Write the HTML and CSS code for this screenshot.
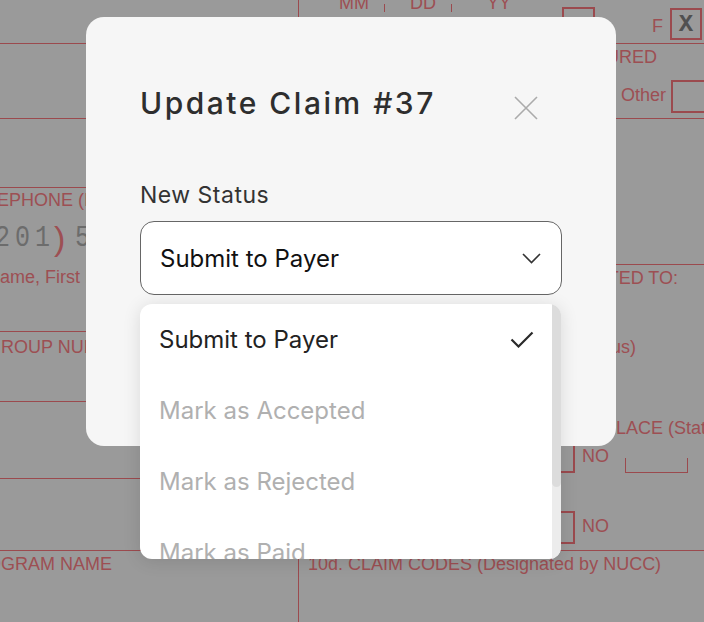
FILE: index.html
```html
<!DOCTYPE html>
<html>
<head>
<meta charset="utf-8">
<link rel="stylesheet" href="styles.css">
</head>
<body>
<div class="form">
  <div class="hl" style="top:43px;left:0;width:704px"></div>
  <div class="hl" style="top:118px;left:0;width:704px"></div>
  <div class="hl" style="top:187px;left:0;width:298px"></div>
  <div class="hl" style="top:264px;left:298px;width:406px"></div>
  <div class="hl" style="top:331px;left:0;width:298px"></div>
  <div class="hl" style="top:401px;left:0;width:298px"></div>
  <div class="hl" style="top:478px;left:0;width:298px"></div>
  <div class="hl" style="top:550px;left:0;width:704px"></div>
  <div class="vl" style="left:298px;top:0;height:622px"></div>

  <span class="ft" style="left:339px;top:-7px">MM</span>
  <span class="tick" style="left:384px"></span>
  <span class="ft" style="left:410px;top:-7px">DD</span>
  <span class="tick" style="left:451px"></span>
  <span class="ft" style="left:487px;top:-7px">YY</span>
  <span class="box" style="left:562px;top:7px;width:33px;height:33px"></span>
  <span class="ft" style="left:652px;top:16px">F</span>
  <span class="box xbox" style="left:670px;top:8px;width:32px;height:32px">X</span>
  <span class="ft" style="right:47px;top:47px">INSURED</span>
  <span class="ft" style="left:621px;top:85px">Other</span>
  <span class="box" style="left:671px;top:80px;width:40px;height:33px"></span>

  <span class="ft" style="left:-36px;top:190px">TELEPHONE (Include Area Code)</span>
  <span class="digit" style="left:-5px;top:224px">2</span>
  <span class="digit" style="left:15px;top:224px">0</span>
  <span class="digit" style="left:35px;top:224px">1</span>
  <span class="paren" style="left:54px;top:220px">)</span>
  <span class="digit" style="left:75px;top:224px">5</span>
  <span class="ft" style="left:-13px;top:267px">Name, First Name</span>
  <span class="ft" style="left:-13px;top:337px">GROUP NUMBER</span>
  <span class="ft" style="left:-38px;top:554px">PROGRAM NAME</span>
  <span class="ft" style="left:308px;top:554px">10d. CLAIM CODES (Designated by NUCC)</span>
  <span class="ft" style="right:26px;top:268px">RELATED TO:</span>
  <span class="ft" style="right:68px;top:337px">Status)</span>
  <span class="ft" style="left:604px;top:418px">PLACE (State)</span>
  <span class="box" style="left:540px;top:440px;width:35px;height:33px"></span>
  <span class="ft" style="left:582px;top:446px">NO</span>
  <span class="bracket" style="left:625px;top:458px;width:63px;height:15px"></span>
  <span class="box" style="left:540px;top:511px;width:35px;height:33px"></span>
  <span class="ft" style="left:582px;top:516px">NO</span>
</div>

<div class="modal">
  <div class="modal-head">
    <h1 class="title">Update Claim #37</h1>
    <svg class="close" width="24" height="24" viewBox="0 0 24 24"><path d="M1 1 L23 23 M23 1 L1 23" stroke="#ababab" stroke-width="1.6" fill="none"/></svg>
  </div>
  <div class="label">New Status</div>
  <div class="select">
    <span>Submit to Payer</span>
    <svg width="19" height="11" viewBox="0 0 19 11"><path d="M1 1 L9.5 9.5 L18 1" stroke="#333" stroke-width="1.6" fill="none"/></svg>
  </div>
</div>

<div class="menu">
  <div class="options">
    <div class="opt active"><span>Submit to Payer</span>
      <svg width="24" height="17" viewBox="0 0 24 17"><path d="M1.5 8.5 L8.5 15.5 L22.5 1.5" stroke="#2a2a2a" stroke-width="2.2" fill="none"/></svg>
    </div>
    <div class="opt"><span>Mark as Accepted</span></div>
    <div class="opt"><span>Mark as Rejected</span></div>
    <div class="opt"><span>Mark as Paid</span></div>
  </div>
  <div class="scroll"><div class="thumb"></div></div>
</div>
</body>
</html>
```

FILE: styles.css
```css
html, body {
  margin: 0;
  padding: 0;
}
body {
  width: 704px;
  height: 622px;
  overflow: hidden;
  background: #9a9a9a;
  position: relative;
  font-family: "Inter", "Liberation Sans", sans-serif;
}
.form {
  position: absolute;
  inset: 0;
  font-family: "Liberation Sans", Arial, sans-serif;
  color: #9d4f53;
}
.hl {
  position: absolute;
  height: 1px;
  background: #9b4a4e;
}
.vl {
  position: absolute;
  width: 1px;
  background: #9b4a4e;
}
.ft {
  position: absolute;
  font-size: 18px;
  line-height: 20px;
  white-space: nowrap;
}
.tick {
  position: absolute;
  top: 4px;
  width: 1px;
  height: 8px;
  background: #9b4a4e;
}
.box {
  position: absolute;
  border: 2px solid #9b4a4e;
  box-sizing: border-box;
}
.xbox {
  font-family: "Liberation Mono", monospace;
  font-weight: bold;
  font-size: 24px;
  color: #505050;
  display: flex;
  align-items: center;
  justify-content: center;
}
.digit {
  position: absolute;
  font-family: "Liberation Mono", monospace;
  font-size: 25px;
  line-height: 30px;
  color: #6c6c6c;
  transform: scaleY(1.15);
}
.paren {
  position: absolute;
  font-size: 34px;
  line-height: 36px;
  color: #9d4f53;
}
.bracket {
  position: absolute;
  border: 1px solid #9b4a4e;
  border-top: none;
  box-sizing: border-box;
}

.modal {
  position: absolute;
  left: 86px;
  top: 17px;
  width: 530px;
  height: 429px;
  box-sizing: border-box;
  background: #f6f6f6;
  border-radius: 18px;
  padding: 66px 54px 0 54px;
  display: flex;
  flex-direction: column;
}
.modal-head {
  display: flex;
  align-items: flex-start;
  justify-content: space-between;
  padding-right: 24px;
}
.title {
  margin: 0;
  font-size: 30px;
  line-height: 40px;
  font-weight: 500;
  color: #2e2e2e;
  letter-spacing: 2.5px;
}
.close {
  margin-top: 13px;
}
.label {
  margin-top: 58px;
  font-size: 23px;
  line-height: 28px;
  letter-spacing: 0.5px;
  color: #333;
}
.select {
  margin-top: 12px;
  height: 74px;
  box-sizing: border-box;
  border: 1px solid #666;
  border-radius: 14px;
  background: #fff;
  display: flex;
  align-items: center;
  justify-content: space-between;
  padding: 0 20px 0 19px;
  font-size: 24px;
  color: #111;
}

.menu {
  position: absolute;
  left: 140px;
  top: 304px;
  width: 421px;
  height: 255px;
  border-radius: 12px;
  background: #fff;
  overflow: hidden;
  display: flex;
  box-shadow: 0 2px 18px rgba(0, 0, 0, 0.12);
}
.options {
  flex: 1;
  display: flex;
  flex-direction: column;
}
.opt {
  flex: 0 0 71px;
  display: flex;
  align-items: center;
  justify-content: space-between;
  padding: 0 18px 0 19px;
  font-size: 24px;
  color: #b0b0b0;
}
.opt.active {
  color: #222;
}
.scroll {
  width: 9px;
  background: #ececec;
  display: flex;
  flex-direction: column;
}
.thumb {
  height: 183px;
  background: #dcdcdc;
  border-radius: 0 0 5px 5px;
}
```
